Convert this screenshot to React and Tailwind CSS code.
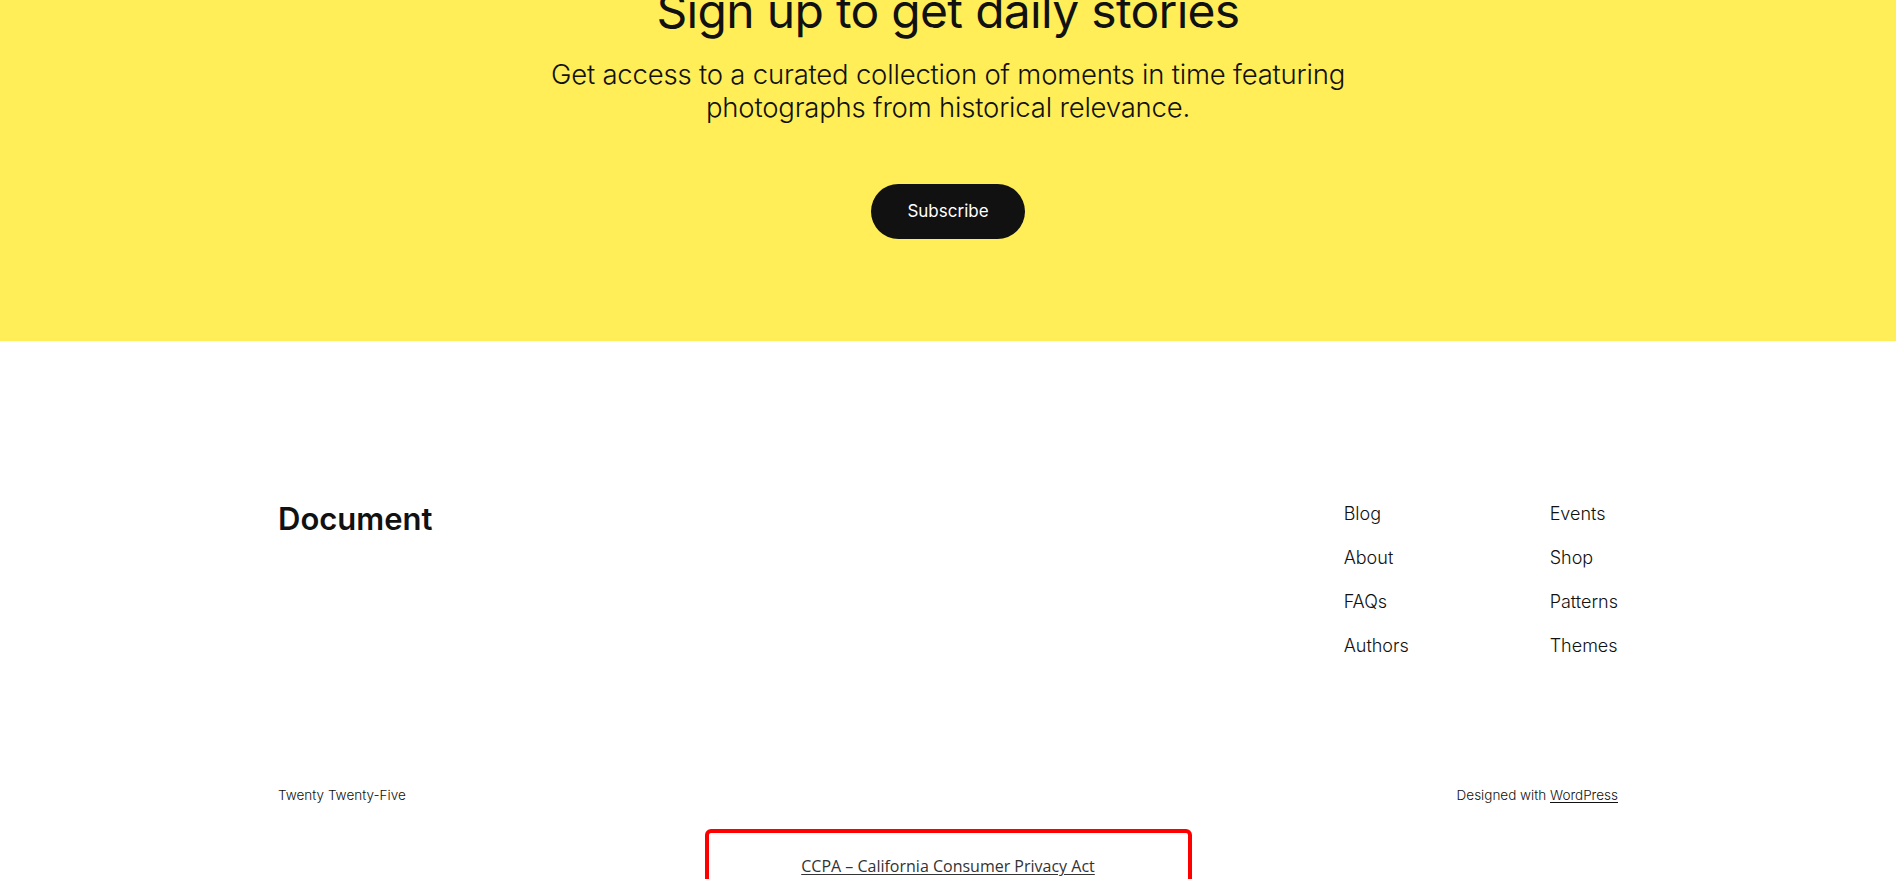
import React from 'react';

const navLeft = ['Blog', 'About', 'FAQs', 'Authors'];
const navRight = ['Events', 'Shop', 'Patterns', 'Themes'];

const NavColumn = ({ items, className }) => (
  <ul className={`flex flex-col gap-[17px] ${className || ''}`}>
    {items.map((item) => (
      <li key={item}>
        <a href="#" className="text-[18px] leading-[27px] font-light text-[#111111]">{item}</a>
      </li>
    ))}
  </ul>
);

const App = () => {
  return (
    <div className="min-h-screen bg-white overflow-hidden font-['Inter','Liberation_Sans',sans-serif] text-[#111111]">
      {/* Newsletter band */}
      <section className="bg-[#ffee58] h-[341px] flex flex-col items-center">
        <h2 className="-mt-[18px] text-[48px] leading-[1.2] font-normal tracking-[-0.7px]">
          Sign up to get daily stories
        </h2>
        <p className="mt-[18px] text-[27.5px] leading-[33px] font-light text-center tracking-[-0.2px]">
          Get access to a curated collection of moments in time featuring
          <br />
          photographs from historical relevance.
        </p>
        <button
          type="button"
          className="mt-[60px] bg-[#111111] text-white rounded-full px-9 py-4 text-[17px] leading-[23px] font-normal"
        >
          Subscribe
        </button>
      </section>

      {/* Footer */}
      <footer className="w-[1340px] mx-auto pt-[159px]">
        <div className="flex justify-between items-start">
          <a href="#" className="mt-[1px] text-[31px] leading-[36px] font-semibold">Document</a>
          <div className="flex">
            <NavColumn items={navLeft} className="w-[206px]" />
            <NavColumn items={navRight} />
          </div>
        </div>

        <div className="mt-[126px] flex justify-between text-[13.5px] leading-[21px] font-light">
          <p>Twenty Twenty-Five</p>
          <p>
            Designed with <a href="#" className="underline underline-offset-2">WordPress</a>
          </p>
        </div>
      </footer>

      {/* CCPA notice */}
      <div className="flex justify-center mt-[23px]">
        <div className="w-[487px] border-4 border-[#ff0000] rounded-md pt-[21px] pb-6 text-center font-['Open_Sans','Noto_Sans',sans-serif]">
          <a href="#" className="text-[16px] leading-6 text-[#333333] underline underline-offset-2">
            CCPA – California Consumer Privacy Act
          </a>
        </div>
      </div>
    </div>
  );
};

export default App;
